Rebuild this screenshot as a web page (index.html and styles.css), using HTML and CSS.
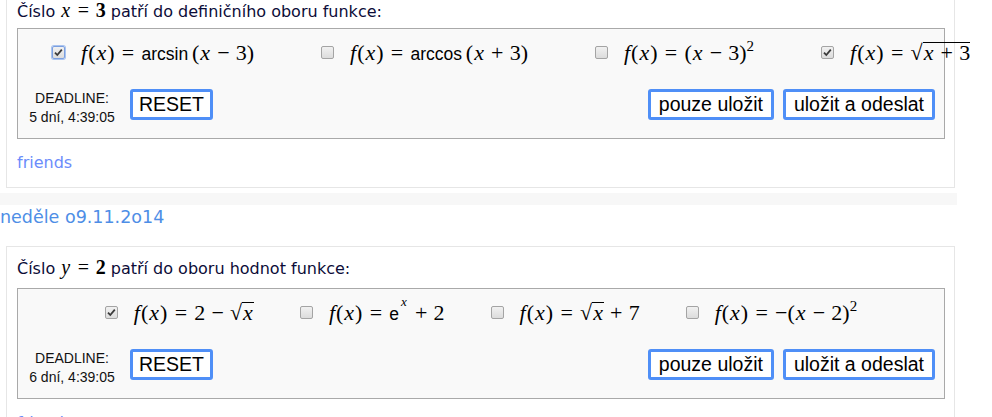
FILE: index.html
```html
<!DOCTYPE html>
<html lang="cs">
<head>
<meta charset="utf-8">
<title>Úlohy</title>
<link rel="stylesheet" href="styles.css">
</head>
<body>
<div class="feed">
  <section class="day">
    <article class="card">
      <p class="question">Číslo <span class="m qm"><i>x</i><span class="rel">=</span><b>3</b></span> patří do definičního oboru funkce:</p>
      <div class="answers">
        <div class="options options--left">
          <label class="opt"><span class="cb cb--on cb--focus"><svg viewBox="0 0 11 11" width="11" height="11"><path d="M2 5.6 L4.3 8 L8.8 2.6" /></svg></span><span class="m"><i>f</i>(<i>x</i>)<span class="rel">=</span><span class="fn">arcsin</span><span class="thin"></span>(<i>x</i><span class="bin">−</span>3)</span></label>
          <label class="opt"><span class="cb"></span><span class="m"><i>f</i>(<i>x</i>)<span class="rel">=</span><span class="fn">arccos</span><span class="thin"></span>(<i>x</i><span class="bin">+</span>3)</span></label>
          <label class="opt"><span class="cb"></span><span class="m"><i>f</i>(<i>x</i>)<span class="rel">=</span>(<i>x</i><span class="bin">−</span>3)<sup class="sup">2</sup></span></label>
          <label class="opt"><span class="cb cb--on"><svg viewBox="0 0 11 11" width="11" height="11"><path d="M2 5.6 L4.3 8 L8.8 2.6" /></svg></span><span class="m"><i>f</i>(<i>x</i>)<span class="rel">=</span><span class="rad">√</span><span class="over"><i>x</i><span class="bin">+</span>3</span></span></label>
        </div>
        <div class="controls">
          <div class="deadline">DEADLINE:<br>5 dní, 4:39:05</div>
          <button class="btn btn--reset" type="button">RESET</button>
          <div class="actions">
            <button class="btn" type="button">pouze uložit</button>
            <button class="btn" type="button">uložit a odeslat</button>
          </div>
        </div>
      </div>
      <a class="link" href="#">friends</a>
    </article>
  </section>
  <div class="sep"></div>
  <h2 class="date">neděle o9.11.2o14</h2>
  <section class="day">
    <article class="card">
      <p class="question question--tall">Číslo <span class="m qm"><i>y</i><span class="rel">=</span><b>2</b></span> patří do oboru hodnot funkce:</p>
      <div class="answers">
        <div class="options options--center">
          <label class="opt"><span class="cb cb--on"><svg viewBox="0 0 11 11" width="11" height="11"><path d="M2 5.6 L4.3 8 L8.8 2.6" /></svg></span><span class="m"><i>f</i>(<i>x</i>)<span class="rel">=</span>2<span class="bin">−</span><span class="rad">√</span><span class="over"><i>x</i></span></span></label>
          <label class="opt"><span class="cb"></span><span class="m"><i>f</i>(<i>x</i>)<span class="rel">=</span><span class="fn">e</span><sup class="supx"><i>x</i></sup><span class="bin">+</span>2</span></label>
          <label class="opt"><span class="cb"></span><span class="m"><i>f</i>(<i>x</i>)<span class="rel">=</span><span class="rad">√</span><span class="over"><i>x</i></span><span class="bin">+</span>7</span></label>
          <label class="opt"><span class="cb"></span><span class="m"><i>f</i>(<i>x</i>)<span class="rel">=</span>−(<i>x</i><span class="bin">−</span>2)<sup class="sup">2</sup></span></label>
        </div>
        <div class="controls">
          <div class="deadline">DEADLINE:<br>6 dní, 4:39:05</div>
          <button class="btn btn--reset" type="button">RESET</button>
          <div class="actions">
            <button class="btn" type="button">pouze uložit</button>
            <button class="btn" type="button">uložit a odeslat</button>
          </div>
        </div>
      </div>
      <a class="link" href="#">friends</a>
    </article>
  </section>
</div>
</body>
</html>
```

FILE: styles.css
```css
html, body {
  margin: 0;
  padding: 0;
  background: #ffffff;
}

body {
  font-family: "DejaVu Sans", Verdana, sans-serif;
  font-size: 16px;
  color: #0c0c38;
  overflow: hidden;
}

.feed {
  width: 957px;
  margin-top: -11px;
}

.day {
  padding: 0 3px 5px 6px;
}

.card {
  border: 1px solid #e6e6e6;
  background: #fff;
  padding: 10px 9px 14px 10px;
  width: 928px;
}

.question {
  margin: 0 0 8px;
  line-height: 20px;
  height: 20px;
  white-space: nowrap;
}

.question--tall {
  padding-bottom: 3px;
}

.m {
  font-family: "Liberation Serif", "Times New Roman", serif;
  font-size: 22px;
  color: #000;
  white-space: nowrap;
}

.qm {
  font-size: 20px;
  line-height: 20px;
}

.m i {
  font-style: italic;
  padding: 0 1px;
}

.m b {
  font-weight: bold;
}

.rel {
  margin: 0 0.33em;
}

.bin {
  margin: 0 0.28em;
}

.thin {
  display: inline-block;
  width: 0.17em;
}

.fn {
  font-family: "Liberation Sans", Arial, sans-serif;
  font-size: 17.5px;
}

.sup {
  font-size: 15px;
  vertical-align: 9px;
  line-height: 0;
}

.supx {
  font-size: 13px;
  vertical-align: 14px;
  line-height: 0;
  margin: 0 1px;
}

.rad {
  display: inline-block;
}

.over {
  display: inline-block;
  border-top: 1px solid #000;
  line-height: 20px;
}

.answers {
  border: 1px solid #a9a9a9;
  background: #f9f9f9;
  padding: 12px 9px 11px 0;
}

.options {
  display: flex;
  align-items: center;
  height: 24px;
}

.options--left {
  padding-left: 34px;
  gap: 67px;
}

.options--center {
  justify-content: center;
  gap: 46px;
  padding-left: 9px;
}

.opt {
  display: flex;
  align-items: center;
  gap: 15px;
  flex: none;
}

.cb {
  box-sizing: border-box;
  width: 13px;
  height: 13px;
  border: 1px solid #a4a4a4;
  border-radius: 2px;
  background: linear-gradient(#f1f1f1, #dcdcdc);
  display: flex;
  align-items: center;
  justify-content: center;
  margin-top: -2px;
}

.cb svg {
  display: block;
}

.cb svg path {
  fill: none;
  stroke: #3a3a3a;
  stroke-width: 1.8;
}

.cb--focus {
  border-color: #7b9fe0;
  box-shadow: 0 0 0 1px #a9c3ef;
}

.controls {
  display: flex;
  align-items: flex-start;
  margin-top: 24px;
}

.deadline {
  font-family: "Liberation Sans", Arial, sans-serif;
  font-size: 14px;
  line-height: 19px;
  color: #111;
  text-align: center;
  padding: 0 0 0 10px;
  width: 88px;
  margin-right: 14px;
}

.btn {
  font-family: "Liberation Sans", Arial, sans-serif;
  font-size: 19.5px;
  line-height: 25px;
  color: #000;
  background: #fff;
  border: 3px solid #4f8ff7;
  border-radius: 3px;
  padding: 0 8px;
  margin: 0;
}

.btn--reset {
  padding: 0 6px;
}

.actions {
  margin-left: auto;
  display: flex;
  gap: 9px;
}

.link {
  display: block;
  margin-top: 14px;
  line-height: 20px;
  color: #6b8cfb;
  text-decoration: none;
}

.sep {
  height: 12px;
  background: #f7f7f7;
}

.date {
  margin: 0 0 18px;
  padding-top: 1px;
  font-size: 17.5px;
  font-weight: normal;
  line-height: 22px;
  color: #4e8ee6;
}
```
